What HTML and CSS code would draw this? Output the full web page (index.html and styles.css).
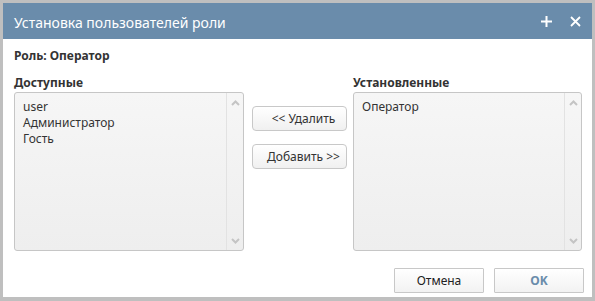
FILE: index.html
```html
<!DOCTYPE html>
<html>
<head>
    <title>Установка пользователей роли</title>
    <link rel="stylesheet" href="styles.css">
</head>
<body>
    <div class="dialog">
        <div class="titlebar">
            <span class="title">Установка пользователей роли</span>
            <span class="tools">
                <svg class="tool" width="13" height="13" viewBox="0 0 13 13"><path d="M6.5 1v11M1 6.5h11" stroke="#fff" stroke-width="2"/></svg>
                <svg class="tool" width="13" height="13" viewBox="0 0 13 13"><path d="M2 2l9 9M11 2l-9 9" stroke="#fff" stroke-width="1.8"/></svg>
            </span>
        </div>

        <div class="content">
            <div class="role">Роль: Оператор</div>

            <div class="columns">
                <div class="column">
                    <div class="caption">Доступные</div>
                    <div class="listbox">
                        <div class="items">
                            <div>user</div>
                            <div>Администратор</div>
                            <div>Гость</div>
                        </div>
                        <div class="scroll">
                            <svg width="9" height="6" viewBox="0 0 9 6"><path d="M1 5l3.5-3.5L8 5" fill="none" stroke="#c4c4c4" stroke-width="2"/></svg>
                            <svg width="9" height="6" viewBox="0 0 9 6"><path d="M1 1l3.5 3.5L8 1" fill="none" stroke="#c4c4c4" stroke-width="2"/></svg>
                        </div>
                    </div>
                </div>

                <div class="moves">
                    <button class="move">&lt;&lt; Удалить</button>
                    <button class="move">Добавить &gt;&gt;</button>
                </div>

                <div class="column">
                    <div class="caption">Установленные</div>
                    <div class="listbox">
                        <div class="items">
                            <div>Оператор</div>
                        </div>
                        <div class="scroll">
                            <svg width="9" height="6" viewBox="0 0 9 6"><path d="M1 5l3.5-3.5L8 5" fill="none" stroke="#c4c4c4" stroke-width="2"/></svg>
                            <svg width="9" height="6" viewBox="0 0 9 6"><path d="M1 1l3.5 3.5L8 1" fill="none" stroke="#c4c4c4" stroke-width="2"/></svg>
                        </div>
                    </div>
                </div>
            </div>

            <div class="footer">
                <button class="action">Отмена</button>
                <button class="action ok">OK</button>
            </div>
        </div>
    </div>
</body>
</html>
```

FILE: styles.css
```css
body {
    margin: 0;
    height: 301px;
    background: #bfbfbf;
    font-family: "Noto Sans", "Open Sans", sans-serif;
    color: #333;
}

.dialog {
    margin: 3px;
    width: 589px;
    height: 294px;
    background: #fff;
    display: flex;
    flex-direction: column;
}

.titlebar {
    display: flex;
    align-items: center;
    justify-content: space-between;
    height: 36px;
    padding: 0 10px 0 11px;
    background: #6a8cab;
    color: #fff;
}

.title {
    padding-top: 2px;
    font-size: 14px;
}

.tools {
    display: flex;
    gap: 16px;
    padding-top: 1px;
}

.tool {
    display: block;
}

.content {
    padding: 9px 10px 0 11px;
}

.role {
    font-size: 12px;
    font-weight: bold;
    line-height: 16px;
}

.columns {
    display: grid;
    grid-template-columns: 230px 109px 229px;
    margin-top: 11px;
}

.caption {
    font-size: 12px;
    font-weight: bold;
    line-height: 16px;
}

.listbox {
    display: flex;
    height: 159px;
    margin-top: 1px;
    box-sizing: border-box;
    border: 1px solid #c6c6c6;
    border-radius: 3px;
    background: linear-gradient(#f6f6f6, #eeeeee);
}

.items {
    flex: 1;
    padding: 6px 8px;
    font-size: 12px;
    line-height: 16px;
}

.scroll {
    display: flex;
    flex-direction: column;
    justify-content: space-between;
    align-items: center;
    width: 16px;
    padding: 7px 0 6px;
    border-left: 1px solid #e2e2e2;
}

.scroll svg {
    display: block;
}

.moves {
    display: flex;
    flex-direction: column;
    gap: 13px;
    padding: 31px 0 0 8px;
}

.move {
    width: 95px;
    height: 25px;
    padding: 0 0 0 8px;
    border: 1px solid #c8c8c8;
    border-radius: 4px;
    background: linear-gradient(#ffffff, #f0f0f0);
    font-family: "Noto Sans", "Open Sans", sans-serif;
    font-size: 12px;
    color: #333;
}

.footer {
    display: flex;
    justify-content: flex-end;
    gap: 10px;
    margin-top: 17px;
    margin-right: -2px;
}

.action {
    width: 90px;
    height: 25px;
    padding: 0;
    border: 1px solid #c8c8c8;
    border-radius: 1px;
    background: linear-gradient(#ffffff, #f2f2f2);
    font-family: "Noto Sans", "Open Sans", sans-serif;
    font-size: 12px;
    color: #222;
}

.action.ok {
    font-weight: bold;
    color: #6a8cab;
}
```
